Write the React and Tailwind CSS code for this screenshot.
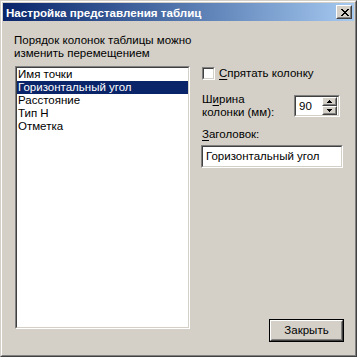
import React from "react";

function Sunken({ className = "", innerClassName = "", children }) {
  return (
    <div className={"border border-t-[#808080] border-l-[#808080] border-b-white border-r-white " + className}>
      <div className={"w-full h-full border border-t-[#404040] border-l-[#404040] border-b-[#d4d0c8] border-r-[#d4d0c8] bg-white " + innerClassName}>
        {children}
      </div>
    </div>
  );
}

function Raised({ className = "", innerClassName = "", children }) {
  return (
    <div className={"border border-t-white border-l-white border-b-[#404040] border-r-[#404040] bg-[#d4d0c8] " + className}>
      <div className={"w-full h-full border border-t-[#d4d0c8] border-l-[#d4d0c8] border-b-[#808080] border-r-[#808080] " + innerClassName}>
        {children}
      </div>
    </div>
  );
}

function CloseX() {
  const px = [
    [0, 0], [1, 0], [6, 0], [7, 0],
    [1, 1], [2, 1], [5, 1], [6, 1],
    [2, 2], [3, 2], [4, 2], [5, 2],
    [3, 3], [4, 3],
    [2, 4], [3, 4], [4, 4], [5, 4],
    [1, 5], [2, 5], [5, 5], [6, 5],
    [0, 6], [1, 6], [6, 6], [7, 6],
  ];
  return (
    <svg width="8" height="7" viewBox="0 0 8 7" shapeRendering="crispEdges">
      {px.map(([x, y], i) => (
        <rect key={i} x={x} y={y} width="1" height="1" fill="#000" />
      ))}
    </svg>
  );
}

function Arrow({ up }) {
  return (
    <svg width="5" height="3" viewBox="0 0 5 3" shapeRendering="crispEdges">
      {up ? (
        <>
          <rect x="2" y="0" width="1" height="1" fill="#000" />
          <rect x="1" y="1" width="3" height="1" fill="#000" />
          <rect x="0" y="2" width="5" height="1" fill="#000" />
        </>
      ) : (
        <>
          <rect x="0" y="0" width="5" height="1" fill="#000" />
          <rect x="1" y="1" width="3" height="1" fill="#000" />
          <rect x="2" y="2" width="1" height="1" fill="#000" />
        </>
      )}
    </svg>
  );
}

const rows = ["Имя точки", "Горизонтальный угол", "Расстояние", "Тип Н", "Отметка"];

export default function App() {
  return (
    <div className="w-[357px] h-[357px] bg-[#d4d0c8] font-['Tahoma','Liberation_Sans',Arial,sans-serif] text-[11.5px] leading-[13px] text-black select-none">
      <div className="w-full h-full border border-t-[#d4d0c8] border-l-[#d4d0c8] border-b-[#404040] border-r-[#404040]">
        <div className="w-full h-full border border-t-white border-l-white border-b-[#808080] border-r-[#808080] p-px flex flex-col">
          {/* Title bar */}
          <div className="h-[18px] shrink-0 bg-gradient-to-r from-[#0a246a] to-[#a6caf0] flex items-center pl-[3px] pr-[2px]">
            <span className="text-white font-bold text-[11.6px] leading-[13px] whitespace-nowrap">
              Настройка представления таблиц
            </span>
            <Raised className="ml-auto w-[16px] h-[14px]" innerClassName="flex items-center justify-center pl-px">
              <CloseX />
            </Raised>
          </div>

          {/* Body */}
          <div className="flex-1 flex pl-[11px] pt-[13px] pr-[10px] pb-[12px]">
            {/* Left column */}
            <div className="w-[177px] shrink-0 flex flex-col">
              <div className="whitespace-nowrap">
                Порядок колонок таблицы можно
                <br />
                изменить перемещением
              </div>
              <Sunken className="mt-[6px] ml-px w-[175px] h-[263px]">
                <div className="flex flex-col">
                  {rows.map((r, i) => (
                    <div
                      key={r}
                      className={
                        "h-[13px] pl-[1px] whitespace-nowrap " +
                        (i === 1 ? "bg-[#0a246a] text-white" : "")
                      }
                    >
                      {r}
                    </div>
                  ))}
                </div>
              </Sunken>
            </div>

            {/* Right column */}
            <div className="flex-1 flex flex-col ml-[10px] pt-[33px]">
              <div className="flex items-center h-[13px] ml-px">
                <Sunken className="w-[13px] h-[13px]" />
                <span className="ml-[4px] whitespace-nowrap">
                  <span className="underline underline-offset-[2px]">С</span>прятать колонку
                </span>
              </div>

              <div className="flex mt-[13px] ml-px">
                <div className="w-[92px] shrink-0">
                  Ш<span className="underline underline-offset-[2px]">и</span>рина
                  <br />
                  колонки (мм):
                </div>
                <Sunken className="mt-[2px] w-[46px] h-[22px]" innerClassName="flex items-center pr-px">
                  <span className="pl-[3px] flex-1">90</span>
                  <div className="flex flex-col">
                    <Raised className="w-[15px] h-[9px]" innerClassName="flex items-center justify-center">
                      <Arrow up />
                    </Raised>
                    <Raised className="w-[15px] h-[9px]" innerClassName="flex items-center justify-center">
                      <Arrow />
                    </Raised>
                  </div>
                </Sunken>
              </div>

              <div className="mt-[9px] ml-px">
                <span className="underline underline-offset-[2px]">З</span>аголовок:
              </div>
              <Sunken className="mt-[4px] w-[142px] h-[23px]" innerClassName="flex items-center pl-[3px]">
                <span className="whitespace-nowrap">Горизонтальный угол</span>
              </Sunken>

              <div className="mt-auto self-end border border-black">
                <Raised className="w-[73px] h-[21px]" innerClassName="flex items-center justify-center">
                  <span>Закрыть</span>
                </Raised>
              </div>
            </div>
          </div>
        </div>
      </div>
    </div>
  );
}
